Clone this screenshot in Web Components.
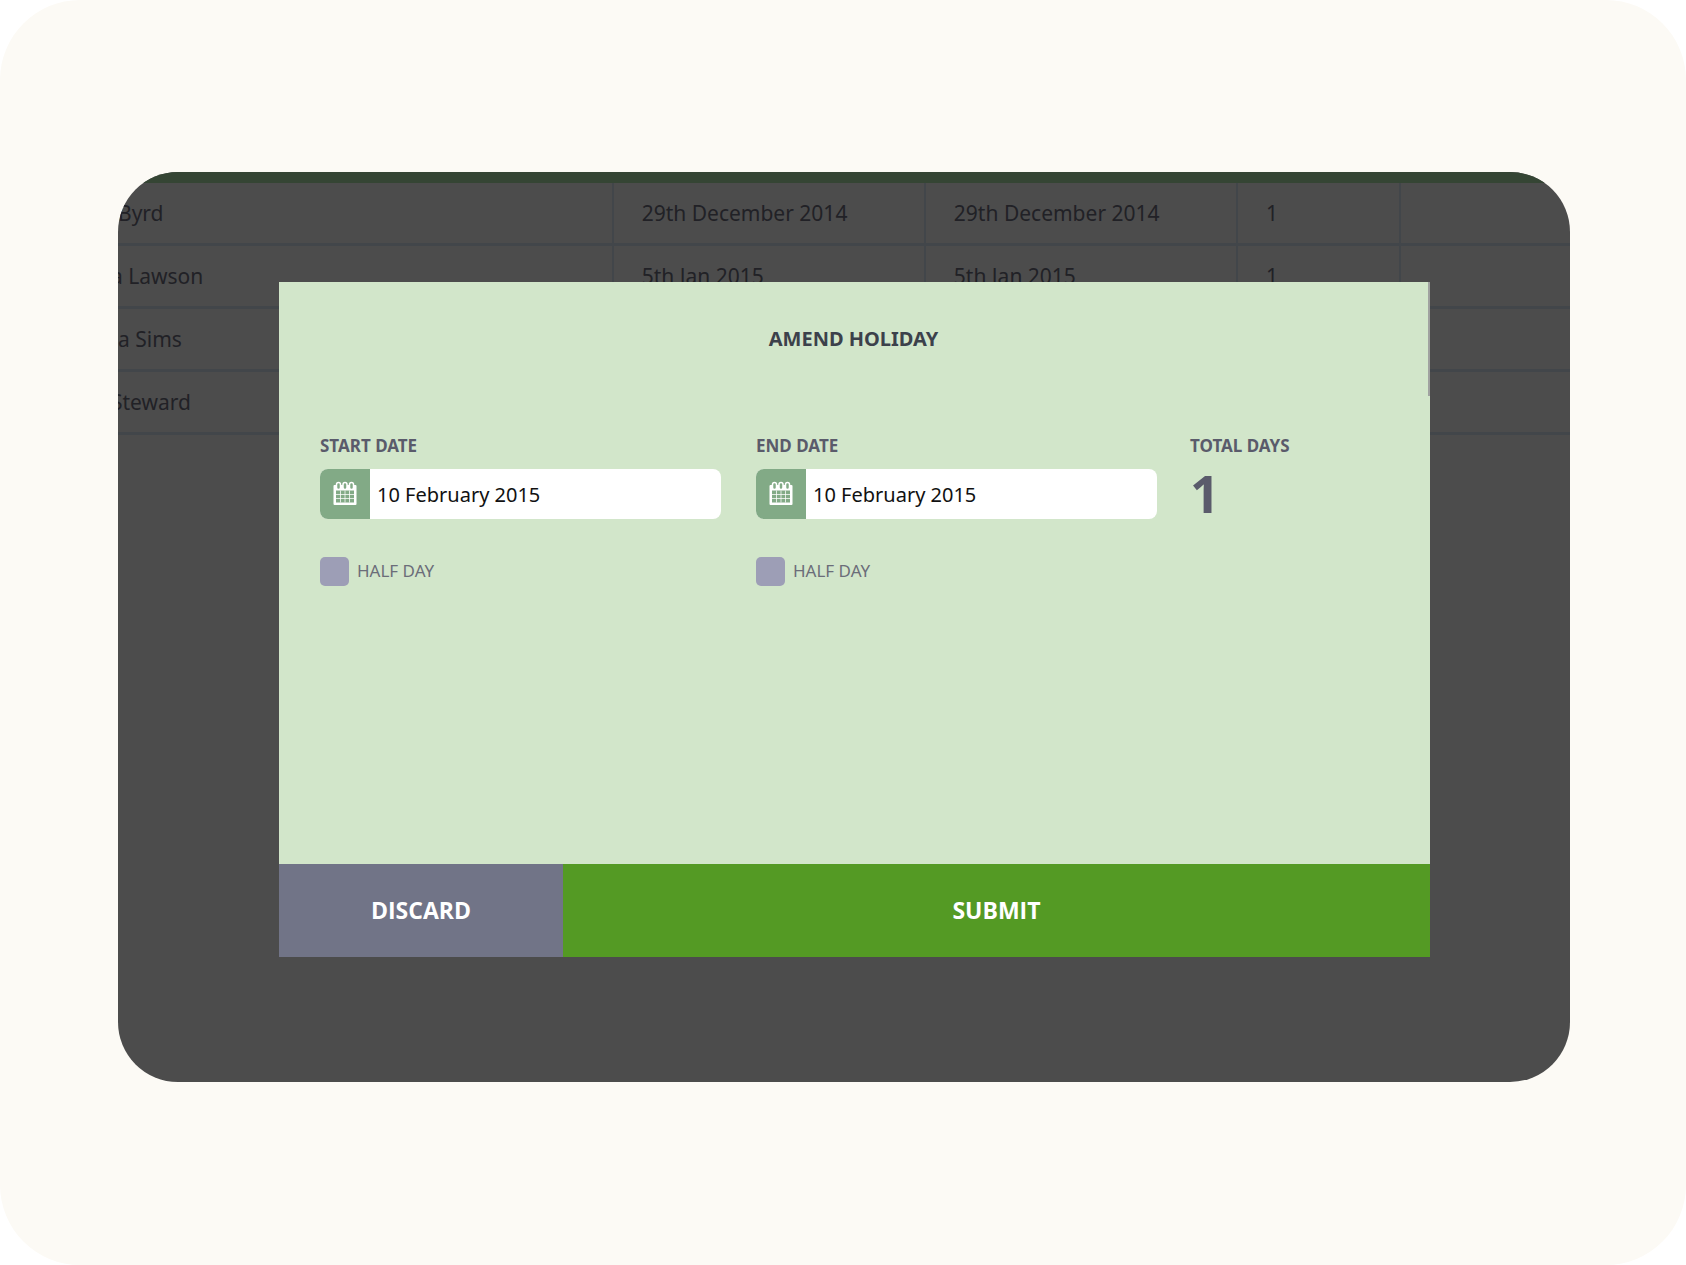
<!DOCTYPE html>
<html lang="en">
<head>
<meta charset="utf-8">
<meta name="viewport" content="width=device-width, initial-scale=1">
<title>Amend holiday</title>
<style>
  body { margin: 0; background: #fff; font-family: "Noto Sans", "Open Sans", sans-serif; }
</style>
</head>
<body>
<app-stage>
  <holiday-table slot="backdrop"></holiday-table>
  <amend-dialog heading="AMEND HOLIDAY">
    <date-field label="START DATE" value="10 February 2015"></date-field>
    <date-field label="END DATE" value="10 February 2015"></date-field>
    <total-days label="TOTAL DAYS">1</total-days>
    <action-button slot="actions" kind="discard">DISCARD</action-button>
    <action-button slot="actions" kind="submit">SUBMIT</action-button>
  </amend-dialog>
</app-stage>
<script>
  class BaseElement extends HTMLElement {
    connectedCallback() {
      if (!this.shadowRoot) this.attachShadow({ mode: "open" }).innerHTML = this.render();
    }
  }

  customElements.define("app-stage", class extends BaseElement {
    render() {
      return `<style>
        :host { display: flex; box-sizing: border-box; min-height: 100vh; padding: 172px 116px 183px 118px;
          background: #fcfaf5; border-radius: 80px; }
        main { flex: 1; min-width: 0; display: grid; grid-template-columns: minmax(0, 1fr); overflow: hidden;
          border-radius: 60px; background: #4c4c4c; }
        ::slotted(*) { grid-area: 1 / 1; }
      </style>
      <main><slot name="backdrop"></slot><slot></slot></main>`;
    }
  });

  customElements.define("holiday-table", class extends BaseElement {
    render() {
      const rows = [
        ["Byrd", "29th December 2014", "29th December 2014", "1"],
        ["a Lawson", "5th Jan 2015", "5th Jan 2015", "1"],
        ["a Sims", "", "", ""],
        ["Steward", "", "", ""]
      ];
      return `<style>
        :host { display: block; color: #212126; font-size: 21px; line-height: 28px; }
        table { width: 100%; height: 263px; border-collapse: separate; border-spacing: 0; table-layout: fixed; border-top: 11px solid #354534; }
        td { padding: 0 0 0 28px; border-bottom: 3px solid #42464a; border-left: 2px solid #42464a; white-space: nowrap; }
        td:first-child { border-left: 0; padding-left: 0; }
        tr:nth-child(even) td:first-child > span { margin-left: -7px; }
        .name { width: 34%; } .date { width: 21.5%; } .days { width: 11.2%; }
      </style>
      <table aria-label="Holidays">
        <colgroup><col class="name"><col class="date"><col class="date"><col class="days"><col></colgroup>
        <tbody>${rows.map(r => `<tr>${r.map(c => `<td><span>${c}</span></td>`).join("")}<td></td></tr>`).join("")}</tbody>
      </table>`;
    }
  });

  customElements.define("amend-dialog", class extends BaseElement {
    render() {
      return `<style>
        :host { display: flex; position: relative; margin: 110px 140px 125px 161px; background: #d2e6ca; }
        section { flex: 1; min-width: 0; display: flex; flex-direction: column; }
        h1 { margin: 0; padding: 43px 2px 0 0; font-size: 20px; line-height: 28px; font-weight: 700; text-align: center; color: #3c414b; }
        .fields { flex: 1; display: grid; grid-template-columns: 401fr 401fr 207fr; column-gap: 35px; align-items: start;
          padding: 81px 31px 0 41px; min-height: 430px; }
        footer { display: grid; grid-template-columns: 284px 1fr; height: 93px; }
        .scroll { position: absolute; top: 0; right: 0; width: 2px; height: 114px; background: #a0a2a0; }
      </style>
      <section role="dialog" aria-labelledby="title">
        <h1 id="title">${this.getAttribute("heading")}</h1>
        <div class="fields"><slot></slot></div>
        <footer><slot name="actions"></slot></footer>
      </section>
      <div class="scroll"></div>`;
    }
  });

  customElements.define("date-field", class extends BaseElement {
    render() {
      return `<style>
        :host { display: block; min-width: 0; }
        .title { display: block; font-size: 17px; line-height: 24px; font-weight: 700; color: #5a5b6b; }
        .box { display: flex; margin-top: 11px; height: 50px; border-radius: 8px; overflow: hidden; background: #fff; }
        .icon { flex: none; display: grid; place-items: center; width: 50px; background: #82aa86; }
        svg { display: block; width: 24px; height: 26px; }
        input[type=text] { flex: 1; min-width: 0; border: 0; outline: 0; padding: 2px 7px 0; background: none;
          font: 20px/28px "Noto Sans", "Open Sans", sans-serif; color: #111; }
        .half { display: flex; align-items: center; gap: 8px; margin-top: 38px; font-size: 17px; line-height: 24px; color: #6b6d79; }
        .half span { padding-bottom: 2px; }
        input[type=checkbox] { appearance: none; flex: none; margin: 0; width: 29px; height: 29px; border-radius: 5px; background: #9d9eb6; }
        input[type=checkbox]:checked { background: #717487; }
      </style>
      <label class="title" for="date">${this.getAttribute("label")}</label>
      <div class="box">
        <span class="icon"><svg viewBox="0 0 24 26" aria-hidden="true">
          <rect x="0.5" y="4" width="23" height="20" rx="1" fill="#fff"/>
          <g fill="#82aa86" stroke="#fff" stroke-width="1.5">
            <rect x="3.5" y="1.5" width="4" height="7" rx="2"/><rect x="10" y="1.5" width="4" height="7" rx="2"/><rect x="16.5" y="1.5" width="4" height="7" rx="2"/>
          </g>
          <rect x="2" y="8" width="20" height="2" fill="#fff"/>
          <rect x="3" y="9.5" width="18" height="12" fill="#82aa86"/>
          <path stroke="#fff" stroke-opacity=".75" d="M7.500 9.500v12M12 9.500v12M16.500 9.500v12M3 13.500h18M3 17.500h18"/>
        </svg></span>
        <input id="date" type="text" value="${this.getAttribute("value")}">
      </div>
      <label class="half"><input type="checkbox"><span>HALF DAY</span></label>`;
    }
  });

  customElements.define("total-days", class extends BaseElement {
    render() {
      return `<style>
        :host { display: block; margin-left: -2px; white-space: nowrap; color: #5a5b6b; font-weight: 700; }
        .title { font-size: 17px; line-height: 24px; }
        .count { font-size: 52px; line-height: 70px; }
      </style>
      <div class="title">${this.getAttribute("label")}</div>
      <div class="count"><slot></slot></div>`;
    }
  });

  customElements.define("action-button", class extends BaseElement {
    render() {
      return `<style>
        :host { display: grid; --fill: #549a24; }
        :host([kind="discard"]) { --fill: #717487; }
        button { border: 0; margin: 0; padding: 0 0 2px; background: var(--fill); color: #fff; cursor: pointer;
          font: 700 23px/30px "Open Sans", "Noto Sans", sans-serif; }
      </style>
      <button type="button"><slot></slot></button>`;
    }
  });
</script>
</body>
</html>
